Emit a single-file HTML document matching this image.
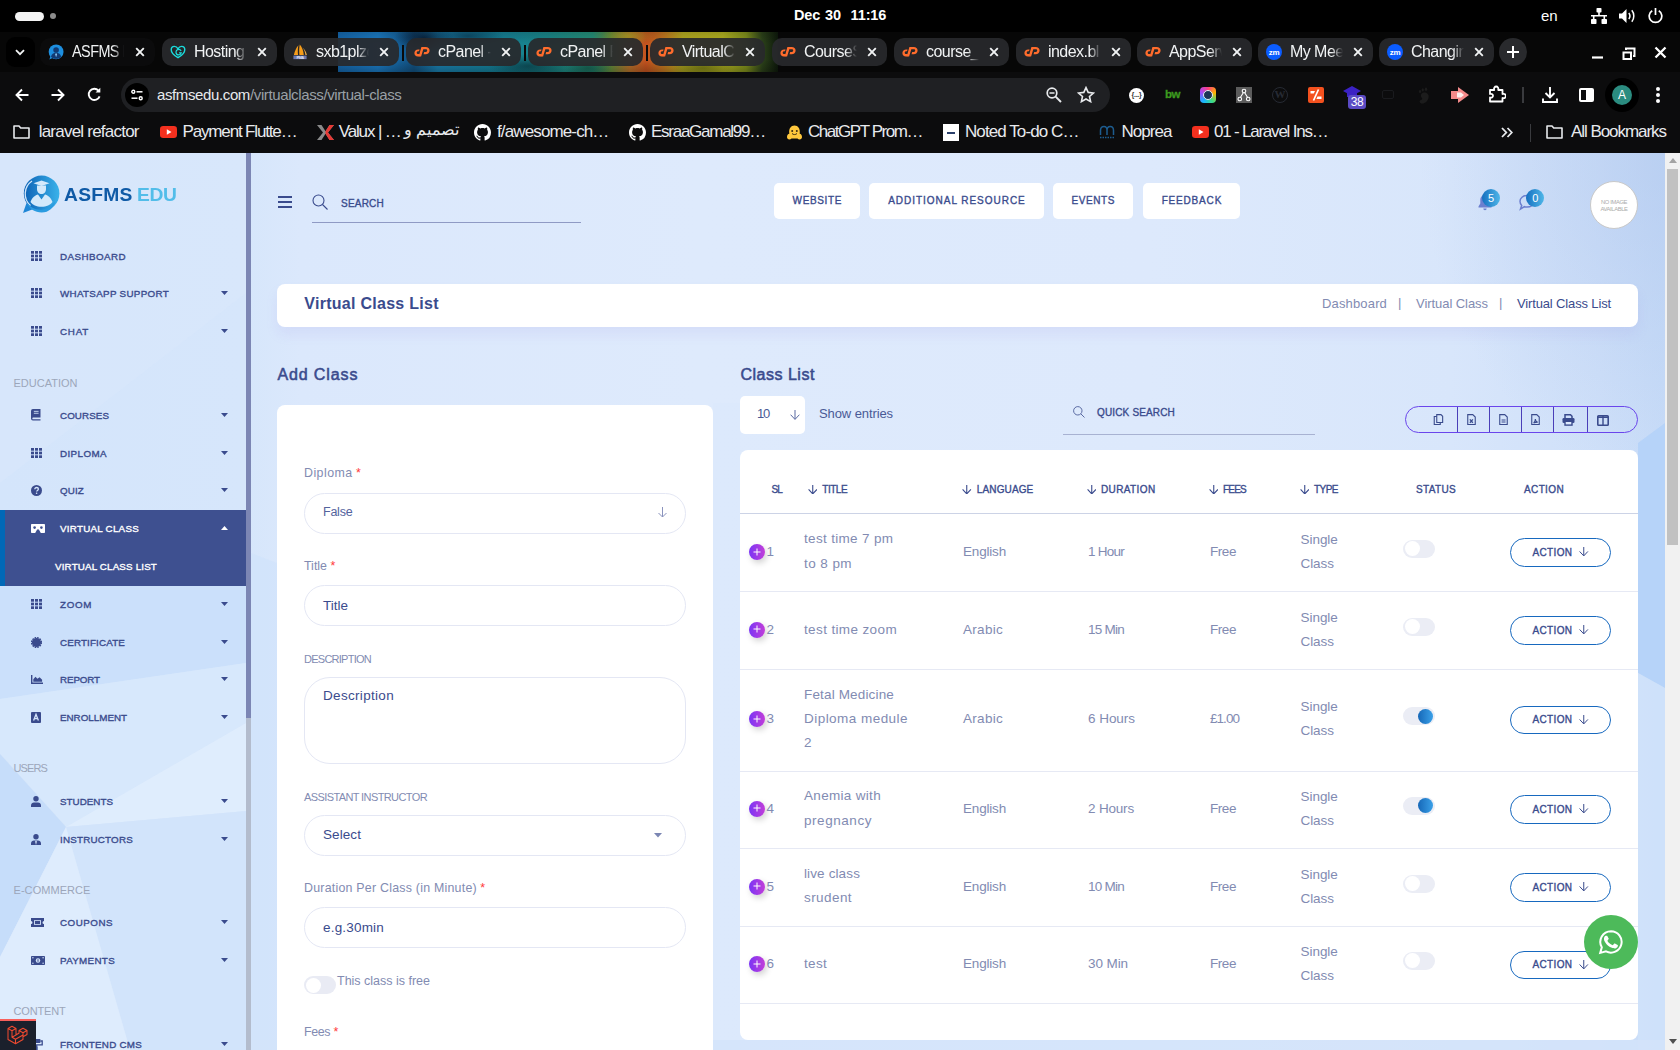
<!DOCTYPE html>
<html>
<head>
<meta charset="utf-8">
<title>Virtual Class List</title>
<style>
*{box-sizing:border-box;margin:0;padding:0}
html,body{width:1680px;height:1050px;overflow:hidden;background:#000;font-family:"Liberation Sans",sans-serif;}
.abs{position:absolute}
#root{position:relative;width:1680px;height:1050px;overflow:hidden}
/* ---------- GNOME top bar ---------- */
#gnome{position:absolute;left:0;top:0;width:1680px;height:32px;background:#000;color:#fff}
#gnome .clock{position:absolute;left:794px;top:7px;white-space:nowrap;font-size:14.500px;font-weight:bold;letter-spacing:-0.150px;word-spacing:1px}
/* ---------- tab strip ---------- */
#tabs{position:absolute;left:0;top:32px;width:1680px;height:40px;background:#070707}
#theme{position:absolute;left:338px;top:0;width:440px;height:40px;overflow:hidden}
.tab{position:absolute;top:6px;height:27.500px;width:115px;border-radius:10px;background:rgba(40,41,44,.93);color:#f1f3f4;font-size:16px;letter-spacing:-0.550px;overflow:hidden}
.tab.on{background:#0b0b0c;}
.tab .t{position:absolute;left:32px;top:5px;white-space:nowrap;width:53px;overflow:hidden;-webkit-mask-image:linear-gradient(90deg,#000 78%,transparent 100%);mask-image:linear-gradient(90deg,#000 78%,transparent 100%)}
.tab .x{position:absolute;left:95px;top:9px;width:10px;height:10px}
.tab .fav{position:absolute;left:8px;top:6px;width:16px;height:16px}
/* ---------- toolbar ---------- */
#toolbar{position:absolute;left:0;top:72px;width:1680px;height:44px;background:#0c0c0d}
#omni{position:absolute;left:121px;top:6px;width:989px;height:34px;border-radius:17px;background:#1f2023}
#omni .url{position:absolute;left:36px;top:8px;font-size:15px;color:#e8eaed;white-space:nowrap;letter-spacing:-0.380px}
#omni .url span{color:#9aa0a6}
/* ---------- bookmarks ---------- */
#bm{position:absolute;left:0;top:116px;width:1680px;height:37px;background:#0c0c0d;color:#e8eaed;font-size:17px}
#bm .b{position:absolute;top:6px;white-space:nowrap}
#bm svg{position:absolute}
/* ---------- page ---------- */
#page{position:absolute;left:0;top:153px;width:1680px;height:897px;background:#dce9fc;overflow:hidden;color:#3e4f8f}
.sbt{font-size:9.800px;color:#3a4b8d;-webkit-text-stroke:.35px #3a4b8d;white-space:nowrap;line-height:13px}
.hb{height:36px;background:#fff;border-radius:5px;text-align:center;font-size:10px;color:#3a4b8d;line-height:36px;white-space:nowrap}
.med{-webkit-text-stroke:.35px currentColor}
.bdg{width:18px;height:18px;border-radius:9px;background:linear-gradient(90deg,#1570c0,#4fb6e8);color:#fff;font-size:11px;text-align:center;line-height:18px}
.tx{white-space:nowrap}
.inp{left:304px;width:382px;border:1px solid #e4e7f4;border-radius:21px;background:#fff}
</style>
</head>
<body>
<div id="root">

<div id="gnome">
  <div class="abs" style="left:15px;top:12px;width:29px;height:8.500px;border-radius:5px;background:#f4f4f4"></div>
  <div class="abs" style="left:50px;top:13px;width:6px;height:6px;border-radius:3px;background:#8c8c8c"></div>
  <div class="clock">Dec 30&nbsp; 11:16</div>
  <div class="abs" style="left:1541px;top:7px;font-size:15px">en</div>
  <svg class="abs" style="left:1591px;top:8px" width="16" height="16" viewBox="0 0 16 16"><rect x="5.500" y="0" width="5" height="4.500" rx=".8" fill="#fff"/><rect x="0" y="11" width="5.500" height="5" rx=".8" fill="#fff"/><rect x="10.500" y="11" width="5.500" height="5" rx=".8" fill="#fff"/><path d="M8 4v4M0 7.800h16M2.700 7.800V11M13.300 7.800V11" stroke="#fff" stroke-width="1.600" fill="none"/></svg>
<svg class="abs" style="left:1619px;top:8px" width="17" height="16" viewBox="0 0 17 16"><path d="M0 5.500h3L7.500 1v14L3 10.500H0z" fill="#fff"/><path d="M9.800 5c1.300 1.700 1.300 4.300 0 6" stroke="#fff" stroke-width="1.500" fill="none"/><path d="M12.800 2.300c2.700 3.300 2.700 8.100 0 11.400" stroke="#fff" stroke-width="1.500" fill="none"/></svg>
<svg class="abs" style="left:1648px;top:8px" width="15" height="16" viewBox="0 0 15 16"><path d="M7.500 0v7" stroke="#fff" stroke-width="1.700"/><path d="M4.200 2.800a6.300 6.300 0 1 0 6.600 0" stroke="#fff" stroke-width="1.700" fill="none"/></svg>
</div>

<div id="tabs">
  <div id="theme"><div class="abs" style="left:0;top:0;width:440px;height:40px;background:linear-gradient(90deg,#1566ab 0,#1b7ac2 40px,#12507f 76px,#1a7fae 100px,#157f9a 150px,#1a8688 210px,#258f78 255px,#5f8a3c 272px,#b8702a 292px,#c4521f 308px,#c2771f 326px,#b4aa20 345px,#b0b020 385px,#7f8f1c 408px,#2c421a 424px,#0d180b 440px)"></div>
<div class="abs" style="left:0;top:0;width:440px;height:40px;background:radial-gradient(ellipse 30px 14px at 86px 6px,rgba(6,20,40,.8),transparent),radial-gradient(ellipse 40px 12px at 190px 34px,rgba(5,40,50,.6),transparent),radial-gradient(ellipse 36px 10px at 130px 4px,rgba(5,30,50,.55),transparent),radial-gradient(ellipse 24px 10px at 250px 36px,rgba(10,50,40,.5),transparent),radial-gradient(ellipse 30px 10px at 365px 36px,rgba(60,70,10,.5),transparent),radial-gradient(ellipse 26px 9px at 290px 4px,rgba(150,160,30,.6),transparent),linear-gradient(180deg,rgba(0,0,0,.15),rgba(0,0,0,0) 30%,rgba(0,0,0,0) 70%,rgba(0,0,0,.25))"></div>
</div>
  <div class="abs" style="left:6px;top:5px;width:29px;height:30px;border-radius:9px;background:#000"></div>
<svg class="abs" style="left:15px;top:16.500px" width="10" height="7" viewBox="0 0 10 7"><path d="M1 1.200L5 5.200l4-4" stroke="#f1f3f4" stroke-width="1.800" fill="none"/></svg>
<div class="tab on" style="left:40px"><svg class="fav" viewBox="0 0 17 17"><circle cx="8.600" cy="8.300" r="7.900" fill="#1d8fe0"/><path d="M1.500 16.500l1.300-4.200 2.600 2.400z" fill="#1d8fe0"/><circle cx="8.600" cy="6.400" r="3" fill="#123a73"/><path d="M3.200 13.600c.5-3 2.600-4.300 5.400-4.300s4.900 1.300 5.400 4.300c-1.400 1.400-3.300 2.200-5.400 2.200s-4-.8-5.400-2.200z" fill="#123a73"/><path d="M8.600 9.600l-1 1.200 1 3.200 1-3.200z" fill="#8cc8f5"/></svg><div class="t" style="letter-spacing:-0.600px;transform:scaleX(.9);transform-origin:0 0;width:58px">ASFMS E</div><svg class="x" viewBox="0 0 10 10"><path d="M1.200 1.200l7.600 7.600M8.800 1.200l-7.600 7.600" stroke="#f1f3f4" stroke-width="1.900" fill="none"/></svg></div>
<div class="tab" style="left:162px"><svg class="fav" viewBox="0 0 17 17"><path d="M8.500 14.500C5 12.500 1.300 9.600 1.300 6.100c0-2.100 1.500-3.600 3.400-3.600 1.700 0 2.900 1 3.800 2.700.9-1.700 2.100-2.700 3.800-2.700 1.900 0 3.400 1.500 3.400 3.600 0 3.500-3.700 6.400-7.200 8.400z" fill="none" stroke="#1bdbdb" stroke-width="1.500"/><path d="M11.800 7.300c-.5-1-1.400-1.600-2.500-1.600-1.600 0-2.900 1.300-2.900 3s1.300 2.900 2.900 2.900c1.300 0 2.300-.8 2.600-2.100H9.600" fill="none" stroke="#1bdbdb" stroke-width="1.300"/></svg><div class="t">Hosting</div><svg class="x" viewBox="0 0 10 10"><path d="M1.200 1.200l7.600 7.600M8.800 1.200l-7.600 7.600" stroke="#f1f3f4" stroke-width="1.900" fill="none"/></svg></div>
<div class="tab" style="left:284px"><svg class="fav" viewBox="0 0 17 17"><path d="M6.800 1.200C4.500 4 2.800 7.500 2 11.800h4.400C6 8 6.100 4.500 6.800 1.200z" fill="#f59c1a"/><path d="M8.300.6c-.8 3.600-.9 7.300-.4 11.200h4.600C12.200 7.300 10.800 3.500 8.300.6z" fill="#f59c1a"/><path d="M11.300 3.600c1.700 2.300 2.700 5 3 8.200h1.500c-.6-3.300-2.100-6-4.500-8.200z" fill="#f8b44a"/><rect x="1.500" y="12.300" width="14" height="3.800" fill="#6c78af"/><text x="8.500" y="15.700" font-family="Liberation Sans" font-weight="bold" font-size="4.200" fill="#dfe3f5" text-anchor="middle">PMA</text></svg><div class="t">sxb1plzc</div><svg class="x" viewBox="0 0 10 10"><path d="M1.200 1.200l7.600 7.600M8.800 1.200l-7.600 7.600" stroke="#f1f3f4" stroke-width="1.900" fill="none"/></svg></div>
<div class="tab" style="left:406px"><svg class="fav" viewBox="0 0 16 16"><path d="M5.600 5.400H4.200C2 5.400.4 6.900.4 9s1.400 3.400 3.400 3.400h1.500l.7-2.300H4.200c-.9 0-1.500-.6-1.500-1.400 0-.9.700-1.500 1.600-1.500H5z" fill="#ff6c2c"/><path d="M7.400 3h4.300c2.300 0 3.900 1.500 3.900 3.500 0 2.200-1.700 3.800-4 3.800H9.500l.7-2.300h1.300c1 0 1.700-.6 1.700-1.500 0-.8-.6-1.300-1.500-1.300H9.300l-2.200 7.400H4.700z" fill="#ff6c2c"/></svg><div class="t">cPanel -</div><svg class="x" viewBox="0 0 10 10"><path d="M1.200 1.200l7.600 7.600M8.800 1.200l-7.600 7.600" stroke="#f1f3f4" stroke-width="1.900" fill="none"/></svg></div>
<div class="tab" style="left:528px"><svg class="fav" viewBox="0 0 16 16"><path d="M5.600 5.400H4.200C2 5.400.4 6.900.4 9s1.400 3.400 3.400 3.400h1.500l.7-2.300H4.200c-.9 0-1.500-.6-1.500-1.400 0-.9.700-1.500 1.600-1.500H5z" fill="#ff6c2c"/><path d="M7.400 3h4.300c2.300 0 3.900 1.500 3.900 3.500 0 2.200-1.700 3.800-4 3.800H9.500l.7-2.300h1.300c1 0 1.700-.6 1.700-1.500 0-.8-.6-1.300-1.500-1.300H9.300l-2.200 7.400H4.700z" fill="#ff6c2c"/></svg><div class="t">cPanel F</div><svg class="x" viewBox="0 0 10 10"><path d="M1.200 1.200l7.600 7.600M8.800 1.200l-7.600 7.600" stroke="#f1f3f4" stroke-width="1.900" fill="none"/></svg></div>
<div class="tab" style="left:650px"><svg class="fav" viewBox="0 0 16 16"><path d="M5.600 5.400H4.200C2 5.400.4 6.900.4 9s1.400 3.400 3.400 3.400h1.500l.7-2.300H4.200c-.9 0-1.500-.6-1.500-1.400 0-.9.700-1.500 1.600-1.500H5z" fill="#ff6c2c"/><path d="M7.400 3h4.300c2.300 0 3.900 1.500 3.900 3.500 0 2.200-1.700 3.800-4 3.800H9.500l.7-2.300h1.300c1 0 1.700-.6 1.700-1.500 0-.8-.6-1.300-1.500-1.300H9.300l-2.200 7.400H4.700z" fill="#ff6c2c"/></svg><div class="t">VirtualC</div><svg class="x" viewBox="0 0 10 10"><path d="M1.200 1.200l7.600 7.600M8.800 1.200l-7.600 7.600" stroke="#f1f3f4" stroke-width="1.900" fill="none"/></svg></div>
<div class="tab" style="left:772px"><svg class="fav" viewBox="0 0 16 16"><path d="M5.600 5.400H4.200C2 5.400.4 6.900.4 9s1.400 3.400 3.400 3.400h1.500l.7-2.300H4.200c-.9 0-1.500-.6-1.500-1.400 0-.9.700-1.500 1.600-1.500H5z" fill="#ff6c2c"/><path d="M7.400 3h4.300c2.300 0 3.900 1.500 3.900 3.500 0 2.200-1.700 3.800-4 3.800H9.500l.7-2.300h1.300c1 0 1.700-.6 1.700-1.500 0-.8-.6-1.300-1.500-1.300H9.300l-2.200 7.400H4.700z" fill="#ff6c2c"/></svg><div class="t">CourseS</div><svg class="x" viewBox="0 0 10 10"><path d="M1.200 1.200l7.600 7.600M8.800 1.200l-7.600 7.600" stroke="#f1f3f4" stroke-width="1.900" fill="none"/></svg></div>
<div class="tab" style="left:894px"><svg class="fav" viewBox="0 0 16 16"><path d="M5.600 5.400H4.200C2 5.400.4 6.900.4 9s1.400 3.400 3.400 3.400h1.500l.7-2.300H4.200c-.9 0-1.500-.6-1.500-1.400 0-.9.700-1.500 1.600-1.500H5z" fill="#ff6c2c"/><path d="M7.400 3h4.300c2.300 0 3.900 1.500 3.900 3.500 0 2.200-1.700 3.800-4 3.800H9.500l.7-2.300h1.300c1 0 1.700-.6 1.700-1.500 0-.8-.6-1.300-1.500-1.300H9.300l-2.200 7.400H4.700z" fill="#ff6c2c"/></svg><div class="t">course_</div><svg class="x" viewBox="0 0 10 10"><path d="M1.200 1.200l7.600 7.600M8.800 1.200l-7.600 7.600" stroke="#f1f3f4" stroke-width="1.900" fill="none"/></svg></div>
<div class="tab" style="left:1016px"><svg class="fav" viewBox="0 0 16 16"><path d="M5.600 5.400H4.200C2 5.400.4 6.900.4 9s1.400 3.400 3.400 3.400h1.500l.7-2.300H4.200c-.9 0-1.500-.6-1.500-1.400 0-.9.700-1.500 1.600-1.500H5z" fill="#ff6c2c"/><path d="M7.400 3h4.300c2.300 0 3.900 1.500 3.900 3.500 0 2.200-1.700 3.800-4 3.800H9.500l.7-2.300h1.300c1 0 1.700-.6 1.700-1.500 0-.8-.6-1.300-1.500-1.300H9.300l-2.200 7.400H4.700z" fill="#ff6c2c"/></svg><div class="t">index.bl</div><svg class="x" viewBox="0 0 10 10"><path d="M1.200 1.200l7.600 7.600M8.800 1.200l-7.600 7.600" stroke="#f1f3f4" stroke-width="1.900" fill="none"/></svg></div>
<div class="tab" style="left:1137px"><svg class="fav" viewBox="0 0 16 16"><path d="M5.600 5.400H4.200C2 5.400.4 6.900.4 9s1.400 3.400 3.400 3.400h1.500l.7-2.300H4.200c-.9 0-1.500-.6-1.500-1.400 0-.9.700-1.500 1.600-1.500H5z" fill="#ff6c2c"/><path d="M7.400 3h4.300c2.300 0 3.900 1.500 3.900 3.500 0 2.200-1.700 3.800-4 3.800H9.500l.7-2.300h1.300c1 0 1.700-.6 1.700-1.500 0-.8-.6-1.300-1.500-1.300H9.300l-2.200 7.400H4.700z" fill="#ff6c2c"/></svg><div class="t">AppServ</div><svg class="x" viewBox="0 0 10 10"><path d="M1.200 1.200l7.600 7.600M8.800 1.200l-7.600 7.600" stroke="#f1f3f4" stroke-width="1.900" fill="none"/></svg></div>
<div class="tab" style="left:1258px"><svg class="fav" viewBox="0 0 17 17"><circle cx="8.500" cy="8.500" r="8.500" fill="#0b5cff"/><text x="8.500" y="11.300" font-family="Liberation Sans" font-weight="bold" font-size="8.500" fill="#fff" text-anchor="middle" letter-spacing="-0.3">zm</text></svg><div class="t">My Mee</div><svg class="x" viewBox="0 0 10 10"><path d="M1.200 1.200l7.600 7.600M8.800 1.200l-7.600 7.600" stroke="#f1f3f4" stroke-width="1.900" fill="none"/></svg></div>
<div class="tab" style="left:1379px"><svg class="fav" viewBox="0 0 17 17"><circle cx="8.500" cy="8.500" r="8.500" fill="#0b5cff"/><text x="8.500" y="11.300" font-family="Liberation Sans" font-weight="bold" font-size="8.500" fill="#fff" text-anchor="middle" letter-spacing="-0.3">zm</text></svg><div class="t">Changin</div><svg class="x" viewBox="0 0 10 10"><path d="M1.200 1.200l7.600 7.600M8.800 1.200l-7.600 7.600" stroke="#f1f3f4" stroke-width="1.900" fill="none"/></svg></div>
<div class="abs" style="left:402px;top:13px;width:2px;height:16px;background:#0a0a0a"></div>
<div class="abs" style="left:524px;top:13px;width:2px;height:16px;background:#0a0a0a"></div>
<div class="abs" style="left:646px;top:13px;width:2px;height:16px;background:#0a0a0a"></div>
<div class="abs" style="left:1499px;top:6px;width:28px;height:28px;border-radius:14px;background:#292a2d"></div>
<svg class="abs" style="left:1506px;top:13px" width="14" height="14" viewBox="0 0 14 14"><path d="M7 1v12M1 7h12" stroke="#fff" stroke-width="2"/></svg>
<svg class="abs" style="left:1590px;top:10px" width="80" height="24" viewBox="0 0 80 24"><path d="M2 15.500h11" stroke="#fff" stroke-width="2.200"/><path d="M33.500 10.500h7.500v6.500h-7.500z" fill="none" stroke="#fff" stroke-width="2"/><path d="M36 8V6.500h8.500V14H43" fill="none" stroke="#fff" stroke-width="2"/><path d="M65.500 5.500l10 10M75.500 5.500l-10 10" stroke="#fff" stroke-width="2.300"/></svg>
</div>

<div id="toolbar">
  <svg class="abs" style="left:15px;top:16px" width="14" height="14" viewBox="0 0 14 14"><path d="M13.500 7H2M7 1.500L1.500 7 7 12.500" stroke="#fff" stroke-width="1.900" fill="none"/></svg>
<svg class="abs" style="left:51px;top:16px" width="14" height="14" viewBox="0 0 14 14"><path d="M.5 7H12M7 1.500L12.500 7 7 12.500" stroke="#fff" stroke-width="1.900" fill="none"/></svg>
<svg class="abs" style="left:87px;top:15px" width="15" height="15" viewBox="0 0 15 15"><path d="M12.600 9.300A5.600 5.600 0 1 1 11.500 3.600" stroke="#fff" stroke-width="1.900" fill="none"/><path d="M13.300 .8v4.700H8.600z" fill="#fff"/></svg>
  <div id="omni">
    <div class="url">asfmsedu.com<span>/virtualclass/virtual-class</span></div>
    <div class="abs" style="left:4px;top:5px;width:24px;height:24px;border-radius:12px;background:#000"></div>
<svg class="abs" style="left:10px;top:11px" width="12" height="12" viewBox="0 0 12 12"><circle cx="2.300" cy="2.800" r="1.500" fill="none" stroke="#fff" stroke-width="1.400"/><path d="M5.500 2.800h6" stroke="#fff" stroke-width="1.500"/><circle cx="9.700" cy="9.200" r="1.500" fill="none" stroke="#fff" stroke-width="1.400"/><path d="M.5 9.200h6" stroke="#fff" stroke-width="1.500"/></svg>
<svg class="abs" style="left:925px;top:9px" width="16" height="16" viewBox="0 0 16 16"><circle cx="6" cy="6" r="4.800" fill="none" stroke="#e8eaed" stroke-width="1.700"/><path d="M9.600 9.600L15 15" stroke="#e8eaed" stroke-width="1.900"/><path d="M3.500 6h5" stroke="#e8eaed" stroke-width="1.500"/></svg>
<svg class="abs" style="left:956px;top:8px" width="18" height="17" viewBox="0 0 18 17"><path d="M9 1.600l2.200 4.800 5.200.6-3.900 3.500 1.100 5.100L9 13l-4.600 2.600 1.100-5.100L1.600 7l5.200-.6z" fill="none" stroke="#e8eaed" stroke-width="1.600" stroke-linejoin="miter"/></svg>
  </div>
  <div class="abs" style="left:1129px;top:16px;width:15px;height:15px;border-radius:8px;background:#fff;color:#333;font-size:7px;font-weight:bold;text-align:center;line-height:14px;letter-spacing:-0.3px">{...}</div>
<div class="abs" style="left:1165px;top:16px;font-size:11.500px;font-weight:bold;color:#3c9b1f;letter-spacing:-0.500px;-webkit-text-stroke:.3px #3c9b1f">bw</div>
<div class="abs" style="left:1200px;top:15px;width:16px;height:16px;border-radius:4px;background:conic-gradient(from 0deg,#ff3d7f,#ffb400,#3ddc84,#18b6ff,#a14bff,#ff3d7f)"></div><div class="abs" style="left:1203px;top:18px;width:10px;height:10px;border-radius:5px;background:#1d3557;border:1.500px solid #e8eef5"></div>
<div class="abs" style="left:1236px;top:15px;width:16px;height:16px;background:#5c5c5c"></div><svg class="abs" style="left:1237px;top:16px" width="14" height="14" viewBox="0 0 14 14"><circle cx="7" cy="3" r="1.800" fill="none" stroke="#fff" stroke-width="1.100"/><circle cx="2.800" cy="11" r="1.800" fill="none" stroke="#fff" stroke-width="1.100"/><circle cx="11.200" cy="11" r="1.800" fill="none" stroke="#fff" stroke-width="1.100"/><path d="M6.300 4.700L3.500 9.300M7.700 4.700l2.800 4.600" stroke="#fff" stroke-width="1.100"/></svg>
<div class="abs" style="left:1272px;top:15px;width:16px;height:16px;border-radius:8px;border:1.500px solid #262a33;color:#262a33;font-family:'Liberation Serif',serif;font-weight:bold;font-size:11px;text-align:center;line-height:13px">W</div>
<div class="abs" style="left:1308px;top:15px;width:16px;height:16px;border-radius:2px;background:#f4511e"></div><svg class="abs" style="left:1309px;top:16px" width="14" height="14" viewBox="0 0 14 14"><path d="M9.500 1.500L4.500 12.500" stroke="#fff" stroke-width="1.700"/><path d="M1.500 3h4.500L4.800 5.500H1.500zM8.500 8.500h4v2.500H7.400z" fill="#fff"/></svg>
<svg class="abs" style="left:1343px;top:14px" width="18" height="12" viewBox="0 0 18 12"><path d="M9 0l9 5-9 5-9-5z" fill="#3b22c4"/><path d="M4 7v4h10V7" fill="#3b22c4"/></svg><div class="abs" style="left:1348px;top:23px;width:18px;height:14px;border-radius:3px;background:#5b4bc4;color:#fff;font-size:12px;text-align:center;line-height:14px;letter-spacing:-0.3px">38</div>
<div class="abs" style="left:1382px;top:18px;width:12px;height:9px;border-radius:2px;border:1.500px solid #1a1b1e"></div>
<svg class="abs" style="left:1416px;top:15px" width="16" height="17" viewBox="0 0 16 17"><path d="M8 5.500c3 0 5.500 2 4.500 5.500-.8 3-3.500 5.500-6 5.500-2 0-3.300-1.300-2.800-2.600.5-1.200 2-.7 2.500-1.900.4-1-1.300-1.400-1.300-3.200 0-2 1.300-3.300 3.100-3.300z" fill="#1c1c1c"/><ellipse cx="4" cy="4.500" rx="1.100" ry="1.500" fill="#1c1c1c"/><ellipse cx="6.800" cy="2.800" rx="1.100" ry="1.600" fill="#1c1c1c"/><ellipse cx="10" cy="2.200" rx="1.200" ry="1.700" fill="#1c1c1c"/></svg>
<svg class="abs" style="left:1451px;top:15px" width="18" height="16" viewBox="0 0 18 16"><path d="M0 4h7V0l11 8-11 8v-4H0z" fill="#f58a8a"/><path d="M6 5.500h4l3 2.500-3 2.500H6z" fill="#fff" opacity=".85"/></svg>
<svg class="abs" style="left:1488px;top:13px" width="18" height="18" viewBox="0 0 18 18"><path d="M2 5h4.200c-.6-2.300.6-3.500 2-3.500s2.600 1.200 2 3.500H14.500v4c2.300-.6 3.300.6 3.300 2s-1 2.600-3.300 2V16.500H2v-4c2 .5 3-.5 3-1.700s-1-2.300-3-1.800z" fill="none" stroke="#fff" stroke-width="1.800" stroke-linejoin="round"/></svg>
<div class="abs" style="left:1522px;top:15px;width:2px;height:16px;background:#3a3b3e"></div>
<svg class="abs" style="left:1542px;top:15px" width="16" height="16" viewBox="0 0 16 16"><path d="M8 0v10M3.500 6L8 10.500 12.500 6" stroke="#fff" stroke-width="1.900" fill="none"/><path d="M1 11.500V15h14v-3.500" stroke="#fff" stroke-width="1.900" fill="none"/></svg>
<div class="abs" style="left:1579px;top:16px;width:15px;height:14px;border:2px solid #fff;border-radius:2px"></div><div class="abs" style="left:1586px;top:17px;width:7px;height:12px;background:#fff"></div>
<div class="abs" style="left:1605px;top:6px;width:34px;height:34px;border-radius:17px;background:#000"></div><div class="abs" style="left:1612px;top:13px;width:20px;height:20px;border-radius:10px;background:#2b8c80;color:#fff;font-size:12px;text-align:center;line-height:20px">A</div>
<div class="abs" style="left:1656px;top:15px;width:4px;height:4px;border-radius:2px;background:#fff;box-shadow:0 6px 0 #fff,0 12px 0 #fff"></div>
</div>

<div id="bm">
  <svg style="left:13px;top:9px" width="17" height="14" viewBox="0 0 17 14"><path d="M1 1h5l1.700 2H16v10H1z" fill="none" stroke="#e8eaed" stroke-width="1.600" stroke-linejoin="round"/></svg>
<div class="b" style="left:38.7px;letter-spacing:-0.777px">laravel refactor</div>
<svg style="left:160px;top:10px" width="17" height="12" viewBox="0 0 17 12"><rect width="17" height="12" rx="3.200" fill="#f4301e"/><path d="M6.800 3.300v5.400L11.500 6z" fill="#fff"/></svg>
<div class="b" style="left:182.5px;letter-spacing:-1.155px">Payment Flutte…</div>
<svg style="left:317px;top:9px" width="17" height="15" viewBox="0 0 17 15"><path d="M0 0h4.500l4 6.200L12.500 0H17l-6 7.500 6 7.500h-4.500l-4-6.200L4.500 15H0l6-7.500z" fill="#8a8a8a"/><path d="M12.500 0H17l-6 7.500 6 7.500h-4.500L8.500 8.800 8.500 6.200z" fill="#e53935"/></svg>
<div class="b" style="left:338.700px;letter-spacing:-1.125px">Valux | …</div><div class="b" style="left:404px;top:5px;font-size:15.500px" dir="rtl">تصميم و</div>
<svg style="left:474px;top:8px" width="17" height="17" viewBox="0 0 16 16"><path fill="#fff" d="M8 0C3.580 0 0 3.580 0 8c0 3.540 2.290 6.530 5.470 7.590.4.070.55-.17.550-.38 0-.19-.01-.82-.01-1.490-2.010.37-2.530-.49-2.690-.94-.09-.23-.48-.94-.82-1.130-.28-.15-.68-.52-.01-.53.630-.01 1.080.58 1.230.82.720 1.210 1.870.87 2.330.66.070-.52.280-.87.510-1.070-1.780-.2-3.640-.89-3.640-3.950 0-.87.310-1.590.82-2.150-.08-.2-.36-1.020.08-2.120 0 0 .67-.21 2.200.82.640-.18 1.320-.27 2-.27s1.360.09 2 .27c1.530-1.040 2.200-.82 2.200-.82.440 1.100.16 1.920.08 2.120.51.560.82 1.270.82 2.150 0 3.070-1.870 3.750-3.650 3.950.29.250.54.730.54 1.480 0 1.070-.01 1.930-.01 2.200 0 .21.150.46.550.38A8.013 8.013 0 0016 8c0-4.420-3.580-8-8-8z"/></svg>
<div class="b" style="left:497px;letter-spacing:-0.871px">f/awesome-ch…</div>
<svg style="left:629px;top:8px" width="17" height="17" viewBox="0 0 16 16"><path fill="#fff" d="M8 0C3.580 0 0 3.580 0 8c0 3.540 2.290 6.530 5.470 7.590.4.070.55-.17.550-.38 0-.19-.01-.82-.01-1.490-2.010.37-2.530-.49-2.690-.94-.09-.23-.48-.94-.82-1.130-.28-.15-.68-.52-.01-.53.630-.01 1.080.58 1.230.82.720 1.210 1.870.87 2.330.66.070-.52.280-.87.510-1.070-1.780-.2-3.640-.89-3.640-3.950 0-.87.310-1.590.82-2.150-.08-.2-.36-1.020.08-2.120 0 0 .67-.21 2.200.82.640-.18 1.320-.27 2-.27s1.360.09 2 .27c1.530-1.040 2.200-.82 2.200-.82.440 1.100.16 1.920.08 2.120.51.560.82 1.270.82 2.150 0 3.070-1.870 3.750-3.650 3.950.29.250.54.730.54 1.480 0 1.070-.01 1.930-.01 2.200 0 .21.150.46.550.38A8.013 8.013 0 0016 8c0-4.420-3.580-8-8-8z"/></svg>
<div class="b" style="left:651px;letter-spacing:-1.261px">EsraaGamal99…</div>
<svg style="left:786px;top:8px" width="17" height="17" viewBox="0 0 17 17"><path d="M1 13c0-2 1-3 2.300-3.300C2.500 4.500 5 1.500 8.500 1.500s6 3 5.200 8.200C15 10 16 11 16 13c0 1.500-1 2.500-2.300 2.500-1 0-1.700-.4-2.200-1H5.500c-.5.600-1.200 1-2.200 1C2 15.500 1 14.500 1 13z" fill="#ffc83d"/><circle cx="6.200" cy="7" r="1" fill="#3a2a10"/><circle cx="10.800" cy="7" r="1" fill="#3a2a10"/><path d="M6 9.500c1.300 1.400 3.700 1.400 5 0" stroke="#3a2a10" stroke-width="1" fill="none"/></svg>
<div class="b" style="left:808px;letter-spacing:-1.453px">ChatGPT Prom…</div>
<div class="abs" style="left:943px;top:8px;width:16px;height:17px;background:#fff"></div><div class="abs" style="left:947px;top:16px;width:8px;height:2px;background:#2a3f6a"></div>
<div class="b" style="left:965px;letter-spacing:-0.915px">Noted To-do C…</div>
<svg style="left:1099px;top:9px" width="16" height="15" viewBox="0 0 16 15"><path d="M1.500 10V5.500C1.500 3 3 1.500 5 1.500s3 1.500 3 4V10M8 5.500c0-2.500 1.200-4 3.200-4s3.300 1.500 3.300 4V10" fill="none" stroke="#1d5c8f" stroke-width="1.500"/><path d="M1 12.500h14" stroke="#1d5c8f" stroke-width="1.500" stroke-dasharray="1.500 1"/></svg>
<div class="b" style="left:1121.5px;letter-spacing:-0.959px">Noprea</div>
<svg style="left:1191.5px;top:10px" width="17" height="12" viewBox="0 0 17 12"><rect width="17" height="12" rx="3.200" fill="#f4301e"/><path d="M6.800 3.300v5.400L11.500 6z" fill="#fff"/></svg>
<div class="b" style="left:1214px;letter-spacing:-1.216px">01 - Laravel Ins…</div>
<svg style="left:1501px;top:11px" width="12" height="11" viewBox="0 0 12 11"><path d="M1 1l4.300 4.500L1 10M6.500 1l4.300 4.500L6.500 10" fill="none" stroke="#e8eaed" stroke-width="1.800"/></svg>
<div class="abs" style="left:1530px;top:8px;width:1px;height:18px;background:#3a3b3e"></div>
<svg style="left:1546px;top:9px" width="17" height="14" viewBox="0 0 17 14"><path d="M1 1h5l1.700 2H16v10H1z" fill="none" stroke="#e8eaed" stroke-width="1.600" stroke-linejoin="round"/></svg>
<div class="b" style="left:1571px;letter-spacing:-1.049px">All Bookmarks</div>
</div>

<div id="page">
  <div class="abs" style="left:0;top:0;width:1680px;height:897px;background:radial-gradient(ellipse 260px 330px at 1680px 0,rgba(172,196,236,.55),rgba(172,196,236,0) 100%),linear-gradient(90deg,#d4e5fb 0,#d6e6fb 246px,#dbe8fc 300px,#deeafc 700px,#dde9fc 1150px,#d8e6fb 1450px,#cfe0f9 1600px,#c8dcf8 1665px)"></div>
<svg class="abs" style="left:0;top:0" width="1680" height="897" viewBox="0 0 1680 897">
<polygon points="0,0 246,0 246,140 0,330" fill="#d9e8fc" opacity=".5"/>
<polygon points="0,433 246,433 246,510 0,546" fill="#cbe0fb"/>
<polygon points="0,546 246,510 246,570 66,674 0,601" fill="#d7e8fc"/>
<polygon points="0,601 66,674 0,804" fill="#c6ddfa"/>
<polygon points="66,674 246,570 246,658" fill="#dfedfd"/>
<polygon points="66,674 246,658 246,897 130,897" fill="#d2e4fb"/>
<polygon points="66,674 130,897 0,897 0,804" fill="#deecfd"/>
<polygon points="1638,290 1665,270 1665,535 1638,520" fill="#b4d2f8" opacity=".9"/>
<polygon points="1638,520 1665,535 1665,897 1638,897" fill="#cfe2fa" opacity=".8"/>
<polygon points="251,400 277,410 277,897 251,897" fill="#cfe2fb" opacity=".6"/>
<polygon points="713,250 740,250 740,897 713,897" fill="#d9e7fc" opacity=".5"/>
<polygon points="251,887 1665,887 1665,897 251,897" fill="#d3e4fa" opacity=".8"/>
</svg>

  <div class="abs" id="sb" style="left:0;top:0;width:246px;height:897px">
<svg class="abs" style="left:31px;top:98px" width="11" height="10" viewBox="0 0 11 10" fill="#3a4b8d"><rect x="0" y="0" width="3" height="2.700"/><rect x="4" y="0" width="3" height="2.700"/><rect x="8" y="0" width="3" height="2.700"/><rect x="0" y="3.65" width="3" height="2.700"/><rect x="4" y="3.65" width="3" height="2.700"/><rect x="8" y="3.65" width="3" height="2.700"/><rect x="0" y="7.3" width="3" height="2.700"/><rect x="4" y="7.3" width="3" height="2.700"/><rect x="8" y="7.3" width="3" height="2.700"/></svg>
<div class="abs sbt" style="left:60px;top:96.6px;letter-spacing:0.436px">DASHBOARD</div>
<svg class="abs" style="left:31px;top:135px" width="11" height="10" viewBox="0 0 11 10" fill="#3a4b8d"><rect x="0" y="0" width="3" height="2.700"/><rect x="4" y="0" width="3" height="2.700"/><rect x="8" y="0" width="3" height="2.700"/><rect x="0" y="3.65" width="3" height="2.700"/><rect x="4" y="3.65" width="3" height="2.700"/><rect x="8" y="3.65" width="3" height="2.700"/><rect x="0" y="7.3" width="3" height="2.700"/><rect x="4" y="7.3" width="3" height="2.700"/><rect x="8" y="7.3" width="3" height="2.700"/></svg>
<div class="abs sbt" style="left:60px;top:133.6px;letter-spacing:0.312px">WHATSAPP SUPPORT</div>
<svg class="abs" style="left:221px;top:138.2px" width="7" height="5" viewBox="0 0 7 5"><path d="M0 0L3.500 4 7 0z" fill="#3a4b8d"/></svg>
<svg class="abs" style="left:31px;top:173px" width="11" height="10" viewBox="0 0 11 10" fill="#3a4b8d"><rect x="0" y="0" width="3" height="2.700"/><rect x="4" y="0" width="3" height="2.700"/><rect x="8" y="0" width="3" height="2.700"/><rect x="0" y="3.65" width="3" height="2.700"/><rect x="4" y="3.65" width="3" height="2.700"/><rect x="8" y="3.65" width="3" height="2.700"/><rect x="0" y="7.3" width="3" height="2.700"/><rect x="4" y="7.3" width="3" height="2.700"/><rect x="8" y="7.3" width="3" height="2.700"/></svg>
<div class="abs sbt" style="left:60px;top:171.6px;letter-spacing:0.762px">CHAT</div>
<svg class="abs" style="left:221px;top:176.2px" width="7" height="5" viewBox="0 0 7 5"><path d="M0 0L3.500 4 7 0z" fill="#3a4b8d"/></svg>
<svg class="abs" style="left:31px;top:256.2px" width="9.500" height="11.400" viewBox="0 0 10 12"><path d="M2 0h8v9H2.300a.9.900 0 0 0 0 1.800H10V12H2a2 2 0 0 1-2-2V2a2 2 0 0 1 2-2z" fill="#3a4b8d"/><path d="M3 2.500h5M3 4.500h5" stroke="#d6e6fc" stroke-width=".9"/></svg>
<div class="abs sbt" style="left:60px;top:255.6px;letter-spacing:0.077px">COURSES</div>
<svg class="abs" style="left:221px;top:260.2px" width="7" height="5" viewBox="0 0 7 5"><path d="M0 0L3.500 4 7 0z" fill="#3a4b8d"/></svg>
<svg class="abs" style="left:31px;top:295px" width="11" height="10" viewBox="0 0 11 10" fill="#3a4b8d"><rect x="0" y="0" width="3" height="2.700"/><rect x="4" y="0" width="3" height="2.700"/><rect x="8" y="0" width="3" height="2.700"/><rect x="0" y="3.65" width="3" height="2.700"/><rect x="4" y="3.65" width="3" height="2.700"/><rect x="8" y="3.65" width="3" height="2.700"/><rect x="0" y="7.3" width="3" height="2.700"/><rect x="4" y="7.3" width="3" height="2.700"/><rect x="8" y="7.3" width="3" height="2.700"/></svg>
<div class="abs sbt" style="left:60px;top:293.6px;letter-spacing:0.413px">DIPLOMA</div>
<svg class="abs" style="left:221px;top:298.2px" width="7" height="5" viewBox="0 0 7 5"><path d="M0 0L3.500 4 7 0z" fill="#3a4b8d"/></svg>
<svg class="abs" style="left:31px;top:332px" width="11" height="11" viewBox="0 0 11 11"><circle cx="5.500" cy="5.500" r="5.500" fill="#3a4b8d"/><path d="M3.800 4.200c0-1 .8-1.700 1.800-1.700s1.800.7 1.800 1.600c0 1.300-1.700 1.300-1.700 2.500" stroke="#d6e6fc" stroke-width="1.300" fill="none"/><circle cx="5.600" cy="8.300" r=".8" fill="#d6e6fc"/></svg>
<div class="abs sbt" style="left:60px;top:330.6px;letter-spacing:0.148px">QUIZ</div>
<svg class="abs" style="left:221px;top:335.2px" width="7" height="5" viewBox="0 0 7 5"><path d="M0 0L3.500 4 7 0z" fill="#3a4b8d"/></svg>
<svg class="abs" style="left:31px;top:446px" width="11" height="10" viewBox="0 0 11 10" fill="#3a4b8d"><rect x="0" y="0" width="3" height="2.700"/><rect x="4" y="0" width="3" height="2.700"/><rect x="8" y="0" width="3" height="2.700"/><rect x="0" y="3.65" width="3" height="2.700"/><rect x="4" y="3.65" width="3" height="2.700"/><rect x="8" y="3.65" width="3" height="2.700"/><rect x="0" y="7.3" width="3" height="2.700"/><rect x="4" y="7.3" width="3" height="2.700"/><rect x="8" y="7.3" width="3" height="2.700"/></svg>
<div class="abs sbt" style="left:60px;top:444.6px;letter-spacing:0.651px">ZOOM</div>
<svg class="abs" style="left:221px;top:449.2px" width="7" height="5" viewBox="0 0 7 5"><path d="M0 0L3.500 4 7 0z" fill="#3a4b8d"/></svg>
<svg class="abs" style="left:31px;top:484px" width="11" height="11" viewBox="0 0 11 11"><circle cx="5.500" cy="5.500" r="4.600" fill="#3a4b8d"/><circle cx="5.500" cy="5.500" r="4.900" fill="none" stroke="#3a4b8d" stroke-width="1.400" stroke-dasharray="1.600 .97"/></svg>
<div class="abs sbt" style="left:60px;top:482.6px;letter-spacing:0.151px">CERTIFICATE</div>
<svg class="abs" style="left:221px;top:487.2px" width="7" height="5" viewBox="0 0 7 5"><path d="M0 0L3.500 4 7 0z" fill="#3a4b8d"/></svg>
<svg class="abs" style="left:31px;top:522px" width="12" height="9" viewBox="0 0 12 9"><path d="M0 0h1.400v7.600H12V9H0z" fill="#3a4b8d"/><path d="M2.300 6.800V4.300L4.500 1.800 6.400 3.800 8.600 2.200l2.500 2.600v2z" fill="#3a4b8d"/></svg>
<div class="abs sbt" style="left:60px;top:519.6px;letter-spacing:-0.11px">REPORT</div>
<svg class="abs" style="left:221px;top:524.2px" width="7" height="5" viewBox="0 0 7 5"><path d="M0 0L3.500 4 7 0z" fill="#3a4b8d"/></svg>
<svg class="abs" style="left:31px;top:559px" width="10" height="11" viewBox="0 0 10 11"><rect width="10" height="11" rx="1" fill="#3a4b8d"/><path d="M2.600 8.600L5 2.400l2.400 6.200M3.500 6.600h3" stroke="#d6e6fc" stroke-width="1.300" fill="none"/></svg>
<div class="abs sbt" style="left:60px;top:557.6px;letter-spacing:0.002px">ENROLLMENT</div>
<svg class="abs" style="left:221px;top:562.2px" width="7" height="5" viewBox="0 0 7 5"><path d="M0 0L3.500 4 7 0z" fill="#3a4b8d"/></svg>
<svg class="abs" style="left:31px;top:643px" width="10" height="11" viewBox="0 0 10 11"><circle cx="5" cy="2.700" r="2.700" fill="#3a4b8d"/><path d="M0 11V9.300C0 7.500 1.400 6.400 3 6.400h4c1.600 0 3 1.100 3 2.900V11z" fill="#3a4b8d"/></svg>
<div class="abs sbt" style="left:60px;top:641.6px;letter-spacing:0.023px">STUDENTS</div>
<svg class="abs" style="left:221px;top:646.2px" width="7" height="5" viewBox="0 0 7 5"><path d="M0 0L3.500 4 7 0z" fill="#3a4b8d"/></svg>
<svg class="abs" style="left:31px;top:681px" width="10" height="11" viewBox="0 0 10 11"><circle cx="5" cy="2.700" r="2.700" fill="#3a4b8d"/><path d="M0 11V9.300C0 7.500 1.400 6.400 3 6.400h4c1.600 0 3 1.100 3 2.900V11z" fill="#3a4b8d"/><path d="M5 6.400l-.9 1 .9 3.600.9-3.600z" fill="#d6e6fc"/></svg>
<div class="abs sbt" style="left:60px;top:679.6px;letter-spacing:0.218px">INSTRUCTORS</div>
<svg class="abs" style="left:221px;top:684.2px" width="7" height="5" viewBox="0 0 7 5"><path d="M0 0L3.500 4 7 0z" fill="#3a4b8d"/></svg>
<svg class="abs" style="left:31px;top:765px" width="13" height="9" viewBox="0 0 13 9"><path d="M0 0h13v3a1.500 1.500 0 0 0 0 3v3H0V6a1.500 1.500 0 0 0 0-3z" fill="#3a4b8d"/><rect x="3" y="2.200" width="7" height="4.600" fill="#d6e6fc"/><rect x="3.900" y="3" width="5.200" height="3" fill="#3a4b8d"/></svg>
<div class="abs sbt" style="left:60px;top:762.6px;letter-spacing:0.493px">COUPONS</div>
<svg class="abs" style="left:221px;top:767.2px" width="7" height="5" viewBox="0 0 7 5"><path d="M0 0L3.500 4 7 0z" fill="#3a4b8d"/></svg>
<svg class="abs" style="left:31px;top:803px" width="14" height="9" viewBox="0 0 14 9"><rect width="14" height="9" rx=".8" fill="#3a4b8d"/><circle cx="7" cy="4.500" r="2.200" fill="#d6e6fc"/><path d="M7 3.200v2.600" stroke="#3a4b8d" stroke-width="1"/><circle cx="1.900" cy="1.800" r=".7" fill="#d6e6fc"/><circle cx="12.100" cy="1.800" r=".7" fill="#d6e6fc"/><circle cx="1.900" cy="7.200" r=".7" fill="#d6e6fc"/><circle cx="12.100" cy="7.200" r=".7" fill="#d6e6fc"/></svg>
<div class="abs sbt" style="left:60px;top:800.6px;letter-spacing:0.318px">PAYMENTS</div>
<svg class="abs" style="left:221px;top:805.2px" width="7" height="5" viewBox="0 0 7 5"><path d="M0 0L3.500 4 7 0z" fill="#3a4b8d"/></svg>
<svg class="abs" style="left:31px;top:886px" width="12" height="12" viewBox="0 0 12 12"><rect x="0" y="0" width="9.500" height="4" rx=".8" fill="#3a4b8d"/><path d="M9.500 2h1.700v3.800H5.700V8" stroke="#3a4b8d" stroke-width="1.300" fill="none"/><rect x="4.700" y="7.500" width="2" height="4.500" rx=".5" fill="#3a4b8d"/></svg>
<div class="abs sbt" style="left:60px;top:884.6px;letter-spacing:0.255px">FRONTEND CMS</div>
<svg class="abs" style="left:221px;top:889.2px" width="7" height="5" viewBox="0 0 7 5"><path d="M0 0L3.500 4 7 0z" fill="#3a4b8d"/></svg>
<div class="abs" style="left:0;top:357px;width:246px;height:76px;background:#3e5090"></div><div class="abs" style="left:0;top:357px;width:5px;height:76px;background:#0068b7"></div>
<svg class="abs" style="left:31px;top:371px" width="14" height="9" viewBox="0 0 14 9"><path d="M.8 0h12.400c.4 0 .8.300.8.800V8.200c0 .4-.3.800-.8.800H9.800L8 5.800c-.4-.8-1.600-.8-2 0L4.200 9H.8C.3 9 0 8.600 0 8.200V.8C0 .3.300 0 .8 0z" fill="#fff"/><circle cx="3.600" cy="3.600" r="1.300" fill="#3e5090"/><circle cx="10.400" cy="3.600" r="1.300" fill="#3e5090"/></svg>
<div class="abs sbt" style="left:60px;top:368.6px;color:#fff;-webkit-text-stroke:.35px #fff;letter-spacing:0.253px">VIRTUAL CLASS</div>
<svg class="abs" style="left:221px;top:372.2px" width="7" height="5" viewBox="0 0 7 5"><path d="M0 5L3.500 1 7 5z" fill="#fff"/></svg>
<div class="abs sbt" style="left:55px;top:406.6px;color:#fff;-webkit-text-stroke:.35px #fff;letter-spacing:0.16px">VIRTUAL CLASS LIST</div>
<div class="abs" style="left:13.500px;top:223.5px;font-size:11px;line-height:13px;color:#9ca6ba;white-space:nowrap;letter-spacing:0.004px">EDUCATION</div>
<div class="abs" style="left:13.500px;top:608.5px;font-size:11px;line-height:13px;color:#9ca6ba;white-space:nowrap;letter-spacing:-0.88px">USERS</div>
<div class="abs" style="left:13.500px;top:730.5px;font-size:11px;line-height:13px;color:#9ca6ba;white-space:nowrap;letter-spacing:0.061px">E-COMMERCE</div>
<div class="abs" style="left:13.500px;top:851.5px;font-size:11px;line-height:13px;color:#9ca6ba;white-space:nowrap;letter-spacing:-0.166px">CONTENT</div>
</div>
<div class="abs" style="left:246px;top:0;width:5px;height:897px;background:#b3bccd"></div><div class="abs" style="left:246px;top:0;width:5px;height:565px;background:#7c86b4"></div>
  <svg class="abs" style="left:22px;top:22px" width="39" height="39" viewBox="0 0 39 39">
<defs><linearGradient id="lg1" x1="0" y1="0" x2="1" y2="0"><stop offset="0" stop-color="#0d62b6"/><stop offset="1" stop-color="#3ab2ea"/></linearGradient></defs>
<circle cx="19.600" cy="18.400" r="17.800" fill="url(#lg1)"/>
<path d="M1 38l3.500-10 7 6z" fill="#1f86d6"/>
<path d="M8.500 30.500A15.500 15.500 0 0 1 10 6" fill="none" stroke="#cfe6fa" stroke-width="1.300"/>
<path d="M19.500 5.500l8 2.800-8 2.800-8-2.800z" fill="#d3e9fb"/>
<path d="M15 10.500h9v3.500c0 3-2 5-4.500 5s-4.500-2-4.500-5z" fill="#d3e9fb"/>
<path d="M8.500 27c1.500-4.500 5-7 7.500-7.500l3.500 5 3.500-5c2.500.5 6 3 7.500 7.500-2 2.800-6 4.800-11 4.800s-9-2-11-4.800z" fill="#d3e9fb"/>
<path d="M5 28c4 5 10 7.500 16 6.500 5-.8 9-3.500 12-8-1 6-6 11-13.400 11C13 37.500 7.500 34 5 28z" fill="#2a9be0"/>
</svg>
<div class="abs" style="left:64px;top:32px;font-size:17.500px;line-height:20px;font-weight:bold;color:#0f5aa6;white-space:nowrap;transform-origin:0 0;transform:scaleX(1.1);letter-spacing:0.204px">ASFMS</div>
<div class="abs" style="left:137px;top:32px;font-size:17.500px;line-height:20px;font-weight:bold;color:#52bde9;white-space:nowrap;transform-origin:0 0;transform:scaleX(1.1);letter-spacing:-0.346px">EDU</div>
<svg class="abs" style="left:278px;top:43px" width="14" height="12" viewBox="0 0 14 12"><path d="M0 1h14M0 6h14M0 11h14" stroke="#3a4b8d" stroke-width="1.900"/></svg>
<svg class="abs" style="left:312px;top:41px" width="16" height="16" viewBox="0 0 16 16"><circle cx="6.500" cy="6.500" r="5.500" fill="none" stroke="#3a4b8d" stroke-width="1.100"/><path d="M10.500 10.500L15.500 15.500" stroke="#3a4b8d" stroke-width="1.100"/></svg>
<div class="abs med" style="left:341px;top:44px;font-size:10px;line-height:13px;color:#3a4b8d;white-space:nowrap;letter-spacing:0.221px">SEARCH</div>
<div class="abs" style="left:312px;top:69px;width:269px;height:1px;background:#8f9ac4"></div>
<div class="abs hb med" style="left:774px;top:30px;width:86px"><span style="letter-spacing:0.642px;margin-right:-0.642px">WEBSITE</span></div>
<div class="abs hb med" style="left:869px;top:30px;width:175px"><span style="letter-spacing:0.969px;margin-right:-0.969px">ADDITIONAL RESOURCE</span></div>
<div class="abs hb med" style="left:1053px;top:30px;width:80px"><span style="letter-spacing:0.582px;margin-right:-0.582px">EVENTS</span></div>
<div class="abs hb med" style="left:1143px;top:30px;width:97px"><span style="letter-spacing:0.825px;margin-right:-0.825px">FEEDBACK</span></div>
<svg class="abs" style="left:1477px;top:41px" width="16" height="17" viewBox="0 0 16 17"><path d="M8 1C5 1 3.300 3.300 3.300 6v3.500L1.500 12.500v1h13v-1L12.700 9.500V6C12.700 3.300 11 1 8 1z" fill="#6c7fcf"/><path d="M6.300 14.500a1.700 1.700 0 0 0 3.400 0z" fill="#6c7fcf"/></svg>
<div class="abs bdg" style="left:1482px;top:35.69999999999999px">5</div>
<svg class="abs" style="left:1518px;top:41px" width="18" height="17" viewBox="0 0 18 17"><path d="M9 1.500c4 0 7 2.600 7 5.800s-3 5.800-7 5.800c-.9 0-1.700-.1-2.500-.4L2.500 15l1.200-3.500C2.600 10.400 2 8.900 2 7.300c0-3.200 3-5.800 7-5.800z" fill="none" stroke="#6c7fcf" stroke-width="1.500"/></svg>
<div class="abs bdg" style="left:1526.200px;top:35.69999999999999px">0</div>
<div class="abs" style="left:1590px;top:28px;width:48px;height:48px;border-radius:24px;background:#fff;border:1px solid #c9c9c9;color:#ababab;font-size:5.800px;text-align:center;line-height:7.400px;padding-top:16.500px;letter-spacing:-0.350px">NO IMAGE<br>AVAILABLE</div>
  <div class="abs" style="left:277px;top:131px;width:1361px;height:43px;background:#fff;border-radius:8px;box-shadow:0 8px 12px rgba(160,140,230,.12)"></div>
<div class="abs tx" style="left:304.3px;top:142.1px;font-size:16px;line-height:18.4px;color:#3a4b8d;font-weight:bold;letter-spacing:0.276px;">Virtual Class List</div>
<div class="abs tx" style="left:1322px;top:143.9px;font-size:13px;line-height:14.9px;color:#828bb2;letter-spacing:0.156px;">Dashboard</div>
<div class="abs tx" style="left:1398px;top:143.4px;font-size:13px;line-height:14.9px;color:#828bb2;">|</div>
<div class="abs tx" style="left:1416px;top:143.9px;font-size:13px;line-height:14.9px;color:#828bb2;letter-spacing:-0.056px;">Virtual Class</div>
<div class="abs tx" style="left:1499px;top:143.4px;font-size:13px;line-height:14.9px;color:#828bb2;">|</div>
<div class="abs tx" style="left:1517px;top:143.9px;font-size:13px;line-height:14.9px;color:#3a4b8d;letter-spacing:-0.143px;">Virtual Class List</div>
<div class="abs tx" style="left:277.4px;top:212.5px;font-size:16px;line-height:18.4px;color:#3a4b8d;letter-spacing:0.886px;-webkit-text-stroke:.55px #3a4b8d;">Add Class</div>
<div class="abs tx" style="left:740.4px;top:212.5px;font-size:16px;line-height:18.4px;color:#3a4b8d;letter-spacing:0.515px;-webkit-text-stroke:.55px #3a4b8d;">Class List</div>
<div class="abs" style="left:277px;top:252px;width:436px;height:700px;background:#fff;border-radius:8px"></div>
<div class="abs tx" style="left:304px;top:313.2px;font-size:12.4px;line-height:14.3px;color:#828bb2;letter-spacing:0.46px;">Diploma<span style="color:#ff3b3b;letter-spacing:0"> *</span></div>
<div class="abs inp" style="top:339.5px;height:41px"></div>
<div class="abs tx" style="left:323px;top:351.5px;font-size:12.5px;line-height:14.4px;color:#53639d;letter-spacing:-0.233px;">False</div>
<svg class="abs" style="left:657px;top:354px" width="11" height="11" viewBox="0 0 11 11"><path d="M5.500 0v10M1.500 6L5.500 10 9.500 6" stroke="#8a93bd" stroke-width="1" fill="none"/></svg>
<div class="abs tx" style="left:304px;top:406.2px;font-size:12.4px;line-height:14.3px;color:#828bb2;letter-spacing:0.007px;">Title<span style="color:#ff3b3b;letter-spacing:0"> *</span></div>
<div class="abs inp" style="top:432px;height:41px"></div>
<div class="abs tx" style="left:323px;top:445.0px;font-size:13.5px;line-height:15.5px;color:#3a4b8d;letter-spacing:-0.001px;">Title</div>
<div class="abs tx" style="left:304px;top:499.7px;font-size:11px;line-height:12.6px;color:#828bb2;letter-spacing:-0.743px;">DESCRIPTION</div>
<div class="abs inp" style="top:523.5px;height:87.500px;border-radius:26px"></div>
<div class="abs tx" style="left:323px;top:535.0px;font-size:13.5px;line-height:15.5px;color:#3a4b8d;letter-spacing:0.316px;">Description</div>
<div class="abs tx" style="left:304px;top:637.7px;font-size:11px;line-height:12.6px;color:#828bb2;letter-spacing:-0.604px;">ASSISTANT INSTRUCTOR</div>
<div class="abs inp" style="top:662px;height:41px"></div>
<div class="abs tx" style="left:323px;top:674.0px;font-size:13.5px;line-height:15.5px;color:#3a4b8d;letter-spacing:0.08px;">Select</div>
<svg class="abs" style="left:654px;top:680px" width="8" height="5" viewBox="0 0 8 5"><path d="M0 0L4 4.500 8 0z" fill="#7b86b3"/></svg>
<div class="abs tx" style="left:304px;top:728.2px;font-size:12.4px;line-height:14.3px;color:#828bb2;letter-spacing:0.231px;">Duration Per Class (in Minute)<span style="color:#ff3b3b;letter-spacing:0"> *</span></div>
<div class="abs inp" style="top:754px;height:41px"></div>
<div class="abs tx" style="left:323px;top:767.0px;font-size:13.5px;line-height:15.5px;color:#3a4b8d;letter-spacing:0.19px;">e.g.30min</div>
<div class="abs" style="left:304px;top:823px;width:32px;height:18px;border-radius:9px;background:#e9ebf4"></div><div class="abs" style="left:305.500px;top:824.5px;width:15px;height:15px;border-radius:8px;background:#fff"></div>
<div class="abs tx" style="left:337px;top:820.8px;font-size:12.5px;line-height:14.4px;color:#828bb2;letter-spacing:-0.004px;">This class is free</div>
<div class="abs tx" style="left:304px;top:872.3px;font-size:12.4px;line-height:14.3px;color:#828bb2;letter-spacing:-0.392px;">Fees<span style="color:#ff3b3b;letter-spacing:0"> *</span></div>
<div class="abs" style="left:740px;top:243px;width:65px;height:38px;border-radius:5px;background:#fff"></div>
<div class="abs tx" style="left:757px;top:253.8px;font-size:13px;line-height:14.9px;color:#4a5a96;letter-spacing:-1.23px;">10</div>
<svg class="abs" style="left:790.4px;top:256.5px" width="10" height="10" viewBox="0 0 10 10"><path d="M5.0 0v9.2M.6 4.7L5.0 9.4 9.4 4.7" stroke="#5a6aa2" stroke-width="1" fill="none"/></svg>
<div class="abs tx" style="left:819px;top:254.4px;font-size:13px;line-height:14.9px;color:#4a5a96;letter-spacing:-0.096px;">Show entries</div>
<svg class="abs" style="left:1073px;top:253px" width="12" height="12" viewBox="0 0 12 12"><circle cx="4.800" cy="4.800" r="4.200" fill="none" stroke="#5a6aa2" stroke-width="1"/><path d="M7.800 7.800L11.500 11.500" stroke="#5a6aa2" stroke-width="1"/></svg>
<div class="abs tx med" style="left:1097px;top:254.1px;font-size:10px;line-height:11.5px;color:#3a4b8d;letter-spacing:0.156px;">QUICK SEARCH</div>
<div class="abs" style="left:1063px;top:281px;width:252px;height:1px;background:#a8b2d2"></div>
<div class="abs" style="left:1405px;top:253px;width:233px;height:27px;border:1.500px solid #6a45ec;border-radius:14px"></div>
<div class="abs" style="left:1457px;top:254px;width:1.300px;height:25px;background:#4a3fb8"></div>
<div class="abs" style="left:1489px;top:254px;width:1.300px;height:25px;background:#4a3fb8"></div>
<div class="abs" style="left:1521px;top:254px;width:1.300px;height:25px;background:#4a3fb8"></div>
<div class="abs" style="left:1553px;top:254px;width:1.300px;height:25px;background:#4a3fb8"></div>
<div class="abs" style="left:1587px;top:254px;width:1.300px;height:25px;background:#4a3fb8"></div>
<svg class="abs" style="left:1433px;top:261px" width="11" height="11" viewBox="0 0 10.500 11"><path d="M3.500 2.500H1v8h6V9" fill="none" stroke="#3a4b8d" stroke-width="1.100"/><path d="M3.500.6h4.200L9.400 2.300V8.500H3.500z" fill="none" stroke="#3a4b8d" stroke-width="1.100"/></svg>
<svg class="abs" style="left:1466px;top:261px" width="11" height="11" viewBox="0 0 10.500 11"><path d="M1.500.6h5l2.500 2.500v7.400h-7.500z" fill="none" stroke="#3a4b8d" stroke-width="1.100"/><path d="M3.600 5.400l3 3.400M6.600 5.400l-3 3.400" stroke="#3a4b8d" stroke-width="1.300"/></svg>
<svg class="abs" style="left:1498px;top:261px" width="11" height="11" viewBox="0 0 10.500 11"><path d="M1.500.6h5l2.500 2.500v7.400h-7.500z" fill="none" stroke="#3a4b8d" stroke-width="1.100"/><path d="M3.300 6h4M3.300 8h4" stroke="#3a4b8d" stroke-width="1.200"/></svg>
<svg class="abs" style="left:1530px;top:261px" width="11" height="11" viewBox="0 0 10.500 11"><path d="M1.500.6h5l2.500 2.500v7.400h-7.500z" fill="none" stroke="#3a4b8d" stroke-width="1.100"/><path d="M3.300 9c1-.6 1.800-2.500 1.800-4 0 1.800 1.200 3 2.400 3.200-1.600 0-3 .3-4.200.8z" fill="none" stroke="#3a4b8d" stroke-width="1.100"/></svg>
<svg class="abs" style="left:1562px;top:261px" width="13" height="12" viewBox="0 0 13 12"><path d="M3 4V.8h5.500L10 2.300V4" fill="none" stroke="#3a4b8d" stroke-width="1.500"/><rect x=".5" y="4" width="12" height="5" rx="1.300" fill="#3a4b8d"/><rect x="3" y="7.300" width="7" height="3.800" fill="#dce9fc" stroke="#3a4b8d" stroke-width="1.400"/></svg>
<svg class="abs" style="left:1597px;top:261.5px" width="12" height="11" viewBox="0 0 12 11"><rect x=".8" y=".8" width="10.400" height="9.400" rx=".8" fill="none" stroke="#3a4b8d" stroke-width="1.600"/><path d="M.8 2.200h10.400" stroke="#3a4b8d" stroke-width="1.600"/><path d="M6 1v9" stroke="#3a4b8d" stroke-width="1.400"/></svg>
<div class="abs" style="left:740px;top:297px;width:898px;height:590px;background:#fff;border-radius:8px"></div>
<div class="abs tx med" style="left:771.4px;top:330.9px;font-size:10px;line-height:11.5px;color:#3a4b8d;letter-spacing:-0.766px;">SL</div>
<svg class="abs" style="left:807.8px;top:331.8px" width="9.5" height="9.5" viewBox="0 0 9.5 9.5"><path d="M4.75 0v8.7M.6 4.45L4.75 8.9 8.9 4.45" stroke="#3a4b8d" stroke-width="1.1" fill="none"/></svg>
<div class="abs tx med" style="left:822.3px;top:330.9px;font-size:10px;line-height:11.5px;color:#3a4b8d;letter-spacing:-0.485px;">TITLE</div>
<svg class="abs" style="left:962.3px;top:331.8px" width="9.5" height="9.5" viewBox="0 0 9.5 9.5"><path d="M4.75 0v8.7M.6 4.45L4.75 8.9 8.9 4.45" stroke="#3a4b8d" stroke-width="1.1" fill="none"/></svg>
<div class="abs tx med" style="left:976.8px;top:330.9px;font-size:10px;line-height:11.5px;color:#3a4b8d;letter-spacing:0.129px;">LANGUAGE</div>
<svg class="abs" style="left:1086.5px;top:331.8px" width="9.5" height="9.5" viewBox="0 0 9.5 9.5"><path d="M4.75 0v8.7M.6 4.45L4.75 8.9 8.9 4.45" stroke="#3a4b8d" stroke-width="1.1" fill="none"/></svg>
<div class="abs tx med" style="left:1101px;top:330.9px;font-size:10px;line-height:11.5px;color:#3a4b8d;letter-spacing:0.378px;">DURATION</div>
<svg class="abs" style="left:1208.5px;top:331.8px" width="9.5" height="9.5" viewBox="0 0 9.5 9.5"><path d="M4.75 0v8.7M.6 4.45L4.75 8.9 8.9 4.45" stroke="#3a4b8d" stroke-width="1.1" fill="none"/></svg>
<div class="abs tx med" style="left:1223px;top:330.9px;font-size:10px;line-height:11.5px;color:#3a4b8d;letter-spacing:-0.78px;">FEES</div>
<svg class="abs" style="left:1299.5px;top:331.8px" width="9.5" height="9.5" viewBox="0 0 9.5 9.5"><path d="M4.75 0v8.7M.6 4.45L4.75 8.9 8.9 4.45" stroke="#3a4b8d" stroke-width="1.1" fill="none"/></svg>
<div class="abs tx med" style="left:1314px;top:330.9px;font-size:10px;line-height:11.5px;color:#3a4b8d;letter-spacing:-0.53px;">TYPE</div>
<div class="abs tx med" style="left:1416px;top:330.9px;font-size:10px;line-height:11.5px;color:#3a4b8d;letter-spacing:0.339px;">STATUS</div>
<div class="abs tx med" style="left:1524px;top:330.9px;font-size:10px;line-height:11.5px;color:#3a4b8d;letter-spacing:0.37px;">ACTION</div>
<div class="abs" style="left:740px;top:360.4px;width:898px;height:1px;background:#ccd3e6"></div>
<div class="abs" style="left:740px;top:438.20000000000005px;width:898px;height:1px;background:#e6e9f4"></div>
<div class="abs" style="left:749px;top:391px;width:16px;height:16px;border-radius:8px;background:linear-gradient(90deg,#7a35f5,#c23ed8);box-shadow:2px 3px 6px rgba(0,0,0,.18)"></div>
<svg class="abs" style="left:753px;top:394.5px" width="8" height="8" viewBox="0 0 8 8"><path d="M4 .5v7M.5 4h7" stroke="#fff" stroke-width="1"/></svg>
<div class="abs tx" style="left:766.5px;top:390.9px;font-size:13.5px;line-height:15.5px;color:#828bb2;letter-spacing:-3.508px;">1</div>
<div class="abs tx" style="left:804px;top:378.4px;font-size:13.5px;line-height:15.5px;color:#828bb2;letter-spacing:0.323px;">test time 7 pm</div>
<div class="abs tx" style="left:804px;top:402.6px;font-size:13.5px;line-height:15.5px;color:#828bb2;letter-spacing:0.425px;">to 8 pm</div>
<div class="abs tx" style="left:963px;top:390.9px;font-size:13.5px;line-height:15.5px;color:#828bb2;letter-spacing:-0.182px;">English</div>
<div class="abs tx" style="left:1088px;top:390.9px;font-size:13.5px;line-height:15.5px;color:#828bb2;letter-spacing:-0.753px;">1 Hour</div>
<div class="abs tx" style="left:1210px;top:390.9px;font-size:13.5px;line-height:15.5px;color:#828bb2;letter-spacing:-0.44px;">Free</div>
<div class="abs tx" style="left:1300.5px;top:378.9px;font-size:13.5px;line-height:15.5px;color:#828bb2;letter-spacing:-0.038px;">Single</div>
<div class="abs tx" style="left:1300.5px;top:402.9px;font-size:13.5px;line-height:15.5px;color:#828bb2;letter-spacing:-0.071px;">Class</div>
<div class="abs" style="left:1403px;top:386.8px;width:32px;height:18px;border-radius:9px;background:#ebedf5"></div>
<div class="abs" style="left:1404.500px;top:388.3px;width:15px;height:15px;border-radius:8px;background:#fff"></div>
<div class="abs" style="left:1510px;top:385.4px;width:101.300px;height:28.600px;border:1.500px solid #1769bf;border-radius:15px;background:#fff"></div>
<div class="abs tx med" style="left:1532.5px;top:393.9px;font-size:10px;line-height:11.5px;color:#3a4b8d;letter-spacing:0.354px;">ACTION</div>
<svg class="abs" style="left:1579.0px;top:394.4px" width="9.5" height="9.5" viewBox="0 0 9.5 9.5"><path d="M4.75 0v8.7M.6 4.45L4.75 8.9 8.9 4.45" stroke="#3a4b8d" stroke-width="1" fill="none"/></svg>
<div class="abs" style="left:740px;top:515.5px;width:898px;height:1px;background:#e6e9f4"></div>
<div class="abs" style="left:749px;top:468.79999999999995px;width:16px;height:16px;border-radius:8px;background:linear-gradient(90deg,#7a35f5,#c23ed8);box-shadow:2px 3px 6px rgba(0,0,0,.18)"></div>
<svg class="abs" style="left:753px;top:472.29999999999995px" width="8" height="8" viewBox="0 0 8 8"><path d="M4 .5v7M.5 4h7" stroke="#fff" stroke-width="1"/></svg>
<div class="abs tx" style="left:766.5px;top:468.6px;font-size:13.5px;line-height:15.5px;color:#828bb2;letter-spacing:-0.008px;">2</div>
<div class="abs tx" style="left:804px;top:468.6px;font-size:13.5px;line-height:15.5px;color:#828bb2;letter-spacing:0.373px;">test time zoom</div>
<div class="abs tx" style="left:963px;top:468.6px;font-size:13.5px;line-height:15.5px;color:#828bb2;letter-spacing:0.289px;">Arabic</div>
<div class="abs tx" style="left:1088px;top:468.6px;font-size:13.5px;line-height:15.5px;color:#828bb2;letter-spacing:-0.753px;">15 Min</div>
<div class="abs tx" style="left:1210px;top:468.6px;font-size:13.5px;line-height:15.5px;color:#828bb2;letter-spacing:-0.44px;">Free</div>
<div class="abs tx" style="left:1300.5px;top:456.6px;font-size:13.5px;line-height:15.5px;color:#828bb2;letter-spacing:-0.038px;">Single</div>
<div class="abs tx" style="left:1300.5px;top:480.6px;font-size:13.5px;line-height:15.5px;color:#828bb2;letter-spacing:-0.071px;">Class</div>
<div class="abs" style="left:1403px;top:464.6px;width:32px;height:18px;border-radius:9px;background:#ebedf5"></div>
<div class="abs" style="left:1404.500px;top:466.1px;width:15px;height:15px;border-radius:8px;background:#fff"></div>
<div class="abs" style="left:1510px;top:463.2px;width:101.300px;height:28.600px;border:1.500px solid #1769bf;border-radius:15px;background:#fff"></div>
<div class="abs tx med" style="left:1532.5px;top:471.6px;font-size:10px;line-height:11.5px;color:#3a4b8d;letter-spacing:0.354px;">ACTION</div>
<svg class="abs" style="left:1579.0px;top:472.1px" width="9.5" height="9.5" viewBox="0 0 9.5 9.5"><path d="M4.75 0v8.7M.6 4.45L4.75 8.9 8.9 4.45" stroke="#3a4b8d" stroke-width="1" fill="none"/></svg>
<div class="abs" style="left:740px;top:617.5px;width:898px;height:1px;background:#e6e9f4"></div>
<div class="abs" style="left:749px;top:558.3px;width:16px;height:16px;border-radius:8px;background:linear-gradient(90deg,#7a35f5,#c23ed8);box-shadow:2px 3px 6px rgba(0,0,0,.18)"></div>
<svg class="abs" style="left:753px;top:561.8px" width="8" height="8" viewBox="0 0 8 8"><path d="M4 .5v7M.5 4h7" stroke="#fff" stroke-width="1"/></svg>
<div class="abs tx" style="left:766.5px;top:558.1px;font-size:13.5px;line-height:15.5px;color:#828bb2;letter-spacing:-0.008px;">3</div>
<div class="abs tx" style="left:804px;top:533.6px;font-size:13.5px;line-height:15.5px;color:#828bb2;letter-spacing:0.158px;">Fetal Medicine</div>
<div class="abs tx" style="left:804px;top:557.8px;font-size:13.5px;line-height:15.5px;color:#828bb2;letter-spacing:0.461px;">Diploma medule</div>
<div class="abs tx" style="left:804px;top:582.0px;font-size:13.5px;line-height:15.5px;color:#828bb2;letter-spacing:-0.508px;">2</div>
<div class="abs tx" style="left:963px;top:558.1px;font-size:13.5px;line-height:15.5px;color:#828bb2;letter-spacing:0.289px;">Arabic</div>
<div class="abs tx" style="left:1088px;top:558.1px;font-size:13.5px;line-height:15.5px;color:#828bb2;letter-spacing:-0.039px;">6 Hours</div>
<div class="abs tx" style="left:1210px;top:558.1px;font-size:13.5px;line-height:15.5px;color:#828bb2;letter-spacing:-0.957px;">£1.00</div>
<div class="abs tx" style="left:1300.5px;top:546.1px;font-size:13.5px;line-height:15.5px;color:#828bb2;letter-spacing:-0.038px;">Single</div>
<div class="abs tx" style="left:1300.5px;top:570.1px;font-size:13.5px;line-height:15.5px;color:#828bb2;letter-spacing:-0.071px;">Class</div>
<div class="abs" style="left:1403px;top:554.1px;width:32px;height:18px;border-radius:9px;background:#ebedf5"></div>
<div class="abs" style="left:1417.500px;top:555.6px;width:15px;height:15px;border-radius:8px;background:linear-gradient(90deg,#1668b8,#3aa0e8)"></div>
<div class="abs" style="left:1510px;top:552.7px;width:101.300px;height:28.600px;border:1.500px solid #1769bf;border-radius:15px;background:#fff"></div>
<div class="abs tx med" style="left:1532.5px;top:561.1px;font-size:10px;line-height:11.5px;color:#3a4b8d;letter-spacing:0.354px;">ACTION</div>
<svg class="abs" style="left:1579.0px;top:561.6px" width="9.5" height="9.5" viewBox="0 0 9.5 9.5"><path d="M4.75 0v8.7M.6 4.45L4.75 8.9 8.9 4.45" stroke="#3a4b8d" stroke-width="1" fill="none"/></svg>
<div class="abs" style="left:740px;top:694.5px;width:898px;height:1px;background:#e6e9f4"></div>
<div class="abs" style="left:749px;top:647.9px;width:16px;height:16px;border-radius:8px;background:linear-gradient(90deg,#7a35f5,#c23ed8);box-shadow:2px 3px 6px rgba(0,0,0,.18)"></div>
<svg class="abs" style="left:753px;top:651.4px" width="8" height="8" viewBox="0 0 8 8"><path d="M4 .5v7M.5 4h7" stroke="#fff" stroke-width="1"/></svg>
<div class="abs tx" style="left:766.5px;top:647.8px;font-size:13.5px;line-height:15.5px;color:#828bb2;letter-spacing:-0.008px;">4</div>
<div class="abs tx" style="left:804px;top:635.3px;font-size:13.5px;line-height:15.5px;color:#828bb2;letter-spacing:0.315px;">Anemia with</div>
<div class="abs tx" style="left:804px;top:659.5px;font-size:13.5px;line-height:15.5px;color:#828bb2;letter-spacing:0.551px;">pregnancy</div>
<div class="abs tx" style="left:963px;top:647.8px;font-size:13.5px;line-height:15.5px;color:#828bb2;letter-spacing:-0.182px;">English</div>
<div class="abs tx" style="left:1088px;top:647.8px;font-size:13.5px;line-height:15.5px;color:#828bb2;letter-spacing:-0.181px;">2 Hours</div>
<div class="abs tx" style="left:1210px;top:647.8px;font-size:13.5px;line-height:15.5px;color:#828bb2;letter-spacing:-0.44px;">Free</div>
<div class="abs tx" style="left:1300.5px;top:635.8px;font-size:13.5px;line-height:15.5px;color:#828bb2;letter-spacing:-0.038px;">Single</div>
<div class="abs tx" style="left:1300.5px;top:659.8px;font-size:13.5px;line-height:15.5px;color:#828bb2;letter-spacing:-0.071px;">Class</div>
<div class="abs" style="left:1403px;top:643.7px;width:32px;height:18px;border-radius:9px;background:#ebedf5"></div>
<div class="abs" style="left:1417.500px;top:645.2px;width:15px;height:15px;border-radius:8px;background:linear-gradient(90deg,#1668b8,#3aa0e8)"></div>
<div class="abs" style="left:1510px;top:642.3px;width:101.300px;height:28.600px;border:1.500px solid #1769bf;border-radius:15px;background:#fff"></div>
<div class="abs tx med" style="left:1532.5px;top:650.8px;font-size:10px;line-height:11.5px;color:#3a4b8d;letter-spacing:0.354px;">ACTION</div>
<svg class="abs" style="left:1579.0px;top:651.2px" width="9.5" height="9.5" viewBox="0 0 9.5 9.5"><path d="M4.75 0v8.7M.6 4.45L4.75 8.9 8.9 4.45" stroke="#3a4b8d" stroke-width="1" fill="none"/></svg>
<div class="abs" style="left:740px;top:772.5px;width:898px;height:1px;background:#e6e9f4"></div>
<div class="abs" style="left:749px;top:725.7px;width:16px;height:16px;border-radius:8px;background:linear-gradient(90deg,#7a35f5,#c23ed8);box-shadow:2px 3px 6px rgba(0,0,0,.18)"></div>
<svg class="abs" style="left:753px;top:729.2px" width="8" height="8" viewBox="0 0 8 8"><path d="M4 .5v7M.5 4h7" stroke="#fff" stroke-width="1"/></svg>
<div class="abs tx" style="left:766.5px;top:725.6px;font-size:13.5px;line-height:15.5px;color:#828bb2;letter-spacing:-0.008px;">5</div>
<div class="abs tx" style="left:804px;top:713.1px;font-size:13.5px;line-height:15.5px;color:#828bb2;letter-spacing:0.124px;">live class</div>
<div class="abs tx" style="left:804px;top:737.4px;font-size:13.5px;line-height:15.5px;color:#828bb2;letter-spacing:0.424px;">srudent</div>
<div class="abs tx" style="left:963px;top:725.6px;font-size:13.5px;line-height:15.5px;color:#828bb2;letter-spacing:-0.182px;">English</div>
<div class="abs tx" style="left:1088px;top:725.6px;font-size:13.5px;line-height:15.5px;color:#828bb2;letter-spacing:-0.753px;">10 Min</div>
<div class="abs tx" style="left:1210px;top:725.6px;font-size:13.5px;line-height:15.5px;color:#828bb2;letter-spacing:-0.44px;">Free</div>
<div class="abs tx" style="left:1300.5px;top:713.6px;font-size:13.5px;line-height:15.5px;color:#828bb2;letter-spacing:-0.038px;">Single</div>
<div class="abs tx" style="left:1300.5px;top:737.6px;font-size:13.5px;line-height:15.5px;color:#828bb2;letter-spacing:-0.071px;">Class</div>
<div class="abs" style="left:1403px;top:721.5px;width:32px;height:18px;border-radius:9px;background:#ebedf5"></div>
<div class="abs" style="left:1404.500px;top:723.0px;width:15px;height:15px;border-radius:8px;background:#fff"></div>
<div class="abs" style="left:1510px;top:720.1px;width:101.300px;height:28.600px;border:1.500px solid #1769bf;border-radius:15px;background:#fff"></div>
<div class="abs tx med" style="left:1532.5px;top:728.6px;font-size:10px;line-height:11.5px;color:#3a4b8d;letter-spacing:0.354px;">ACTION</div>
<svg class="abs" style="left:1579.0px;top:729.1px" width="9.5" height="9.5" viewBox="0 0 9.5 9.5"><path d="M4.75 0v8.7M.6 4.45L4.75 8.9 8.9 4.45" stroke="#3a4b8d" stroke-width="1" fill="none"/></svg>
<div class="abs" style="left:740px;top:850.2px;width:898px;height:1px;background:#e6e9f4"></div>
<div class="abs" style="left:749px;top:803.1px;width:16px;height:16px;border-radius:8px;background:linear-gradient(90deg,#7a35f5,#c23ed8);box-shadow:2px 3px 6px rgba(0,0,0,.18)"></div>
<svg class="abs" style="left:753px;top:806.6px" width="8" height="8" viewBox="0 0 8 8"><path d="M4 .5v7M.5 4h7" stroke="#fff" stroke-width="1"/></svg>
<div class="abs tx" style="left:766.5px;top:803.0px;font-size:13.5px;line-height:15.5px;color:#828bb2;letter-spacing:-0.008px;">6</div>
<div class="abs tx" style="left:804px;top:803.0px;font-size:13.5px;line-height:15.5px;color:#828bb2;letter-spacing:0.31px;">test</div>
<div class="abs tx" style="left:963px;top:803.0px;font-size:13.5px;line-height:15.5px;color:#828bb2;letter-spacing:-0.182px;">English</div>
<div class="abs tx" style="left:1088px;top:803.0px;font-size:13.5px;line-height:15.5px;color:#828bb2;letter-spacing:-0.087px;">30 Min</div>
<div class="abs tx" style="left:1210px;top:803.0px;font-size:13.5px;line-height:15.5px;color:#828bb2;letter-spacing:-0.44px;">Free</div>
<div class="abs tx" style="left:1300.5px;top:791.0px;font-size:13.5px;line-height:15.5px;color:#828bb2;letter-spacing:-0.038px;">Single</div>
<div class="abs tx" style="left:1300.5px;top:815.0px;font-size:13.5px;line-height:15.5px;color:#828bb2;letter-spacing:-0.071px;">Class</div>
<div class="abs" style="left:1403px;top:798.9px;width:32px;height:18px;border-radius:9px;background:#ebedf5"></div>
<div class="abs" style="left:1404.500px;top:800.4px;width:15px;height:15px;border-radius:8px;background:#fff"></div>
<div class="abs" style="left:1510px;top:797.5px;width:101.300px;height:28.600px;border:1.500px solid #1769bf;border-radius:15px;background:#fff"></div>
<div class="abs tx med" style="left:1532.5px;top:806.0px;font-size:10px;line-height:11.5px;color:#3a4b8d;letter-spacing:0.354px;">ACTION</div>
<svg class="abs" style="left:1579.0px;top:806.5px" width="9.5" height="9.5" viewBox="0 0 9.5 9.5"><path d="M4.75 0v8.7M.6 4.45L4.75 8.9 8.9 4.45" stroke="#3a4b8d" stroke-width="1" fill="none"/></svg>
  <div class="abs" style="left:1584px;top:762px;width:54px;height:54px;border-radius:27px;background:#4dba5a"></div>
<svg class="abs" style="left:1598px;top:776px" width="26" height="26" viewBox="0 0 26 26"><path d="M13 2.200A10.700 10.700 0 0 0 3.800 18.300L2.200 23.900l5.800-1.500A10.700 10.700 0 1 0 13 2.200z" fill="none" stroke="#fff" stroke-width="2"/><path d="M9.400 7.600c-.3-.6-.5-.6-.8-.6h-.7c-.3 0-.7.100-1 .5-.4.400-1.300 1.300-1.300 3.100s1.300 3.600 1.500 3.800c.2.300 2.600 4.100 6.400 5.600 3.200 1.200 3.800 1 4.500.9.700-.1 2.200-.9 2.500-1.800.3-.9.300-1.600.2-1.800-.1-.2-.3-.3-.7-.5l-2.500-1.200c-.4-.1-.6-.2-.9.200-.2.400-1 1.200-1.200 1.400-.2.200-.4.300-.8.100-.4-.2-1.600-.6-3-1.900-1.100-1-1.900-2.200-2.100-2.600-.2-.4 0-.6.200-.8l.6-.7c.2-.2.200-.4.400-.6.100-.2.100-.5 0-.7z" fill="#fff" transform="translate(0.800 0.200) scale(.92)"/></svg>
<div class="abs" style="left:1665px;top:0;width:15px;height:897px;background:#f1f1f1"></div>
<div class="abs" style="left:1667px;top:16px;width:11px;height:376px;background:#c1c1c1"></div>
<svg class="abs" style="left:1669px;top:5px" width="8" height="5" viewBox="0 0 8 5"><path d="M0 5L4 0 8 5z" fill="#a3a3a3"/></svg>
<svg class="abs" style="left:1669px;top:886px" width="8" height="5" viewBox="0 0 8 5"><path d="M0 0L4 5 8 0z" fill="#505050"/></svg>
<div class="abs" style="left:0;top:866px;width:36px;height:31px;background:#1b202c;border-top:2px solid #f8605c"></div>
<svg class="abs" style="left:7px;top:871px" width="22" height="22" viewBox="0 0 22 22"><path d="M1 4.500L5 2.300L9 4.500L5 6.800ZM1 4.500V15.500L8.500 19.800V15.300L5 13.300V6.800M9 4.500V10.800L12 9.200M12 6.500L16 4.300L20 6.500L16 8.800ZM12 6.500V9.200M20 6.500V10.500L16 12.800V8.800M16 12.800V15.500L8.500 19.800M5 13.300L12.300 9.100M8.500 15.300L16 11" fill="none" stroke="#ee4a30" stroke-width="1.050" stroke-linejoin="round"/></svg>
</div>
</div>
</body>
</html>
